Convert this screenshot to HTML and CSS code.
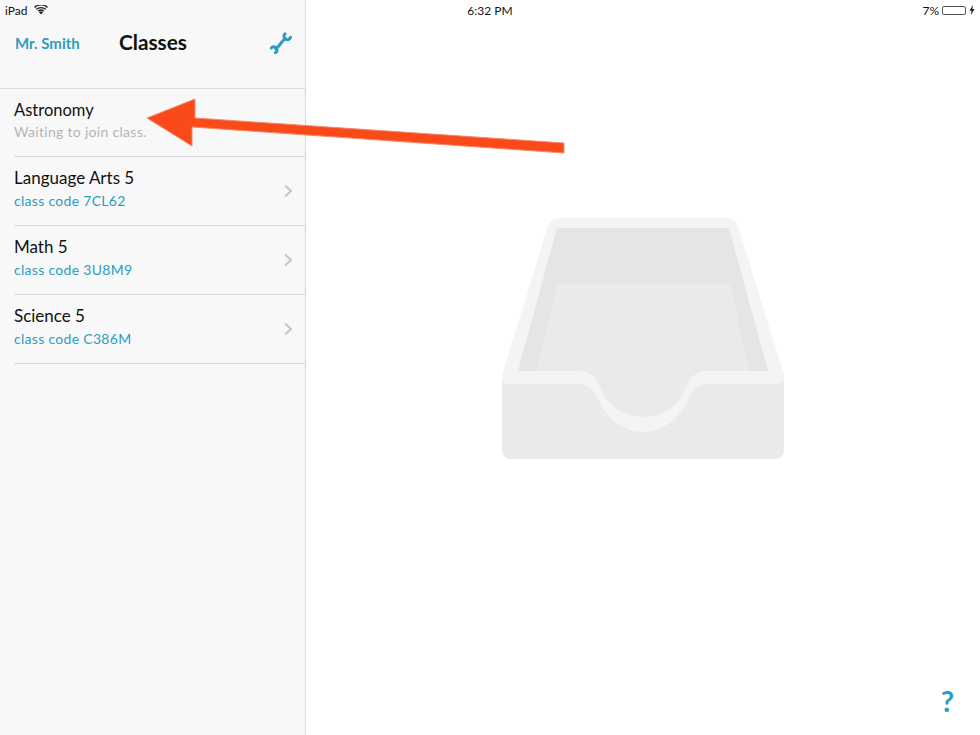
FILE: index.html
```html
<!DOCTYPE html>
<html lang="en">
<head>
<meta charset="utf-8">
<title>Classes</title>
<link rel="stylesheet" href="styles.css">
</head>
<body>
<div class="app">
  <aside class="sidebar">
    <header class="nav">
      <span class="nav-user">Mr. Smith</span>
      <h1 class="nav-title">Classes</h1>
      <svg class="wrench" viewBox="0 0 22 22" width="22" height="22" fill="none" stroke="#2b9dc0" stroke-width="3" stroke-linecap="round"><path d="M5.500 16.500C9 15 9.500 13 11 11C12.500 9 14 8 15.500 6.500"/><path d="M15 1.800C13.500 3.300 13.500 5.500 15.500 7C17.500 8.300 19.800 7.500 20.600 5.300"/><path d="M1.200 16C2.500 14.500 5 14.300 6.300 16C7.500 17.800 7 19.700 5.500 20.800"/></svg>
    </header>
    <ul class="class-list">
      <li class="class-row">
        <div>
          <div class="class-name">Astronomy</div>
          <div class="class-sub muted">Waiting to join class.</div>
        </div>
      </li>
      <li class="class-row">
        <div>
          <div class="class-name">Language Arts 5</div>
          <div class="class-sub">class code 7CL62</div>
        </div>
        <svg class="chev" viewBox="0 0 10 14" width="10" height="14"><path d="M2 1.500 8 7l-6 5.500" fill="none" stroke="#c4c4c4" stroke-width="2"/></svg>
      </li>
      <li class="class-row">
        <div>
          <div class="class-name">Math 5</div>
          <div class="class-sub">class code 3U8M9</div>
        </div>
        <svg class="chev" viewBox="0 0 10 14" width="10" height="14"><path d="M2 1.500 8 7l-6 5.500" fill="none" stroke="#c4c4c4" stroke-width="2"/></svg>
      </li>
      <li class="class-row">
        <div>
          <div class="class-name">Science 5</div>
          <div class="class-sub">class code C386M</div>
        </div>
        <svg class="chev" viewBox="0 0 10 14" width="10" height="14"><path d="M2 1.500 8 7l-6 5.500" fill="none" stroke="#c4c4c4" stroke-width="2"/></svg>
      </li>
    </ul>
  </aside>
  <main class="detail">
    <svg class="tray" viewBox="0 0 282 242" width="282" height="242">
      <path d="M58 1H225Q233 1 236 9L282 158V232Q282 242 272 242H10Q0 242 0 232V158L46 9Q49 1 58 1Z" fill="#f4f4f4"/>
      <path d="M55 11H227L266 154H16Z" fill="#e5e5e5"/>
      <path d="M55 67H228L247 154V205H35V154Z" fill="#eaeaea"/>
      <path d="M1 154H76C88 154 94 160 98 170C105 189 122 200 141 200C160 200 177 189 184 170C188 160 194 154 206 154H281V225H1Z" fill="#f4f4f4"/>
      <path d="M0 162Q1 167 8 167H76C86 167 92 173 96 182C104 202 122 215 141 215C160 215 178 202 186 182C190 173 196 167 206 167H274Q281 167 282 162V232Q282 242 272 242H10Q0 242 0 232Z" fill="#eaeaea"/>
    </svg>
    <span class="help">?</span>
  </main>
</div>
<div class="status">
  <div class="status-left">
    <span>iPad</span>
    <svg viewBox="0 0 14 10" width="14" height="10"><path d="M7 9.500 5 7.200a3 3 0 0 1 4 0zM3.700 5.800a5 5 0 0 1 6.600 0l-.9 1A3.700 3.700 0 0 0 4.600 6.800zM1.800 3.800a8 8 0 0 1 10.400 0l-.9 1a6.600 6.600 0 0 0-8.600 0zM0 1.900a10.500 10.500 0 0 1 14 0l-.9 1a9.200 9.200 0 0 0-12.200 0z" fill="#222"/></svg>
  </div>
  <span class="status-time">6:32 PM</span>
  <div class="status-right">
    <span>7%</span>
    <span class="battery"></span>
    <svg viewBox="0 0 6 10" width="6" height="10"><path d="M3.800 0 .5 5.800h2L2 10l3.500-6h-2z" fill="#222"/></svg>
  </div>
</div>
<svg class="arrow" viewBox="0 0 980 735" width="980" height="735">
  <path d="M147 118 195 99 195 118 564 143 564 153 192 127 192 146Z" fill="#fb4a1a" stroke="#f08a6c" stroke-width="1"/>
</svg>
</body>
</html>
```
FILE: styles.css
```css
* { box-sizing: border-box; }
html, body { margin: 0; padding: 0; }
body {
  width: 980px;
  height: 735px;
  overflow: hidden;
  position: relative;
  background: #fff;
  font-family: Lato, "Open Sans", sans-serif;
  color: #111;
}
.app { display: flex; height: 735px; }
.sidebar {
  width: 306px;
  flex: none;
  background: #f8f8f8;
  border-right: 1px solid #d6d6d6;
}
.nav {
  height: 89px;
  padding: 31px 13px 0 15px;
  border-bottom: 1px solid #dcdcdc;
  display: flex;
  align-items: flex-start;
}
.nav-user {
  width: 104px;
  font-size: 15px;
  font-weight: 700;
  line-height: 24px;
  color: #2b9dc0;
}
.nav-title {
  margin: 0;
  flex: 1;
  font-size: 20.800px;
  font-weight: 700;
  line-height: 22px;
  color: #111;
}
.wrench { display: block; margin-top: 1px; }
.class-list { list-style: none; margin: 0; padding: 0 0 0 14px; }
.class-row {
  height: 69px;
  padding: 10px 12px 0 0;
  border-bottom: 1px solid #dcdcdc;
  display: flex;
  justify-content: space-between;
  align-items: flex-start;
}
.class-row:first-child { height: 68px; }
.class-name { font-size: 17px; line-height: 22px; color: #111; }
.class-row:first-child .class-name { font-size: 16.500px; }
.class-sub { margin-top: 1px; font-size: 14px; line-height: 22px; letter-spacing: 0.3px; color: #2b9dc0; }
.class-sub.muted { margin-top: 0; color: #b4b4b4; }
.chev { margin-top: 17px; }
.detail {
  flex: 1;
  position: relative;
  display: flex;
  align-items: center;
  justify-content: center;
  padding-bottom: 59px;
}
.tray { display: block; }
.help {
  position: absolute;
  right: 26px;
  bottom: 20px;
  font-size: 29px;
  font-weight: 700;
  line-height: 28px;
  color: #2b9dc0;
}
.status {
  position: absolute;
  left: 0;
  top: 0;
  width: 980px;
  height: 20px;
  padding: 0 5px 0 5px;
  display: grid;
  grid-template-columns: 1fr auto 1fr;
  align-items: center;
  font-size: 12px;
  color: #111;
}
.status-left { display: flex; align-items: center; gap: 6px; }
.status-right { display: flex; align-items: center; justify-content: flex-end; gap: 3px; }
.battery {
  width: 24px;
  height: 9px;
  border: 1px solid #555;
  border-radius: 2px;
  background: #fff;
}
.arrow { position: absolute; left: 0; top: 0; pointer-events: none; }
```
